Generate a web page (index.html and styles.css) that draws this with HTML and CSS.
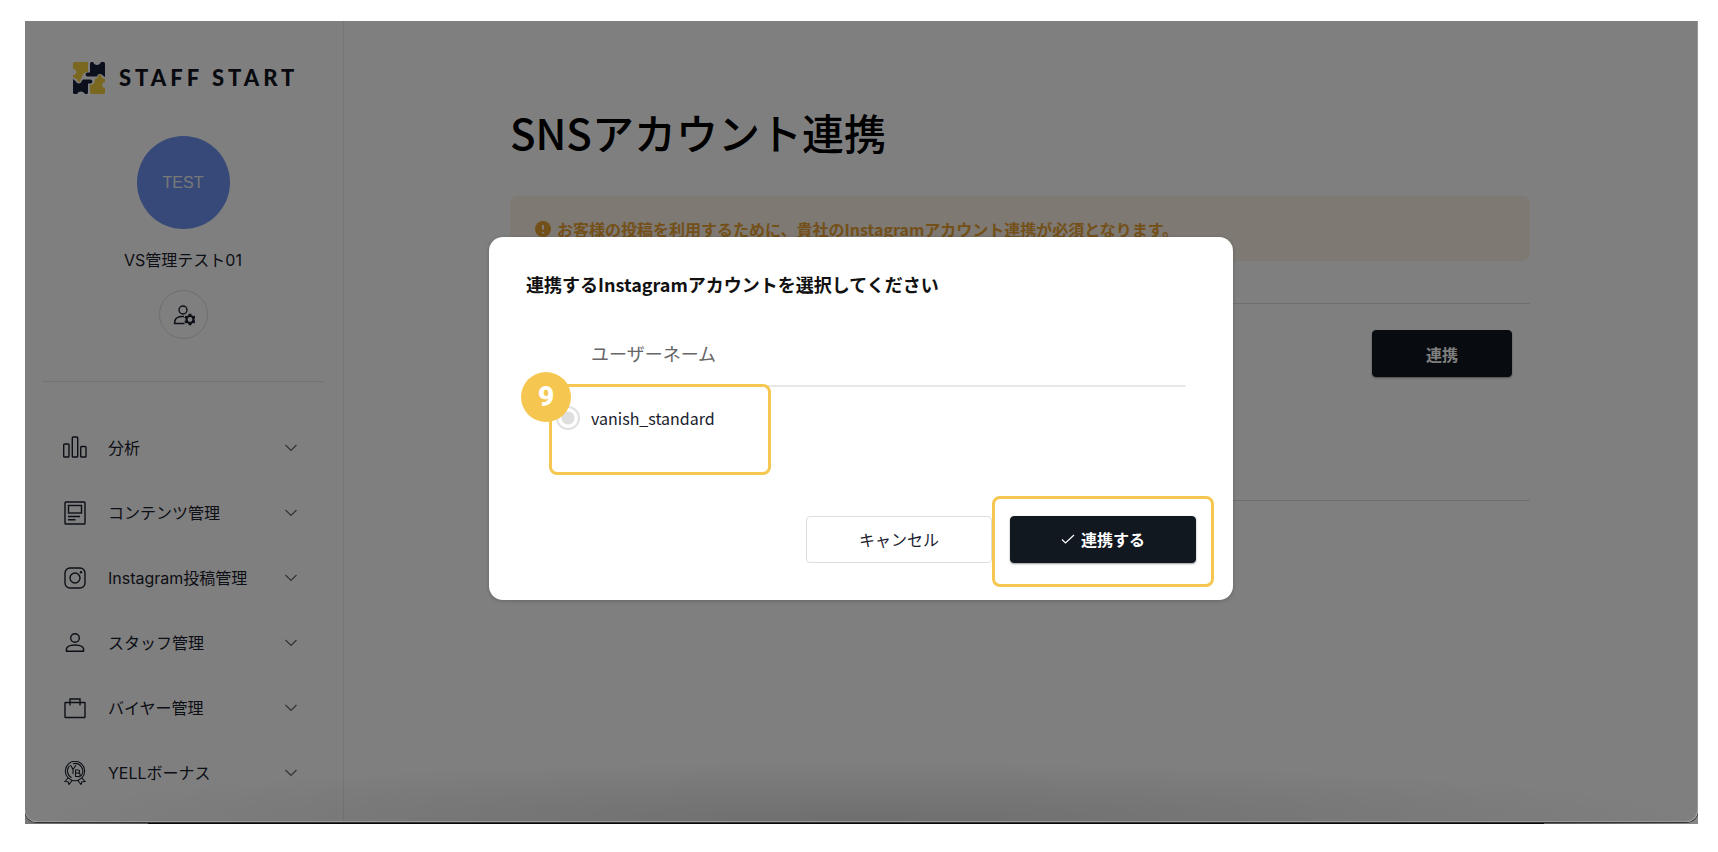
FILE: index.html
```html
<!DOCTYPE html>
<html lang="ja">
<head>
    <meta charset="UTF-8">
    <meta name="viewport" content="width=device-width, initial-scale=1.0">
    <title>SNSアカウント連携</title>
    <link rel="stylesheet" href="styles.css">
</head>
<body>

    <div class="desktop">
        <div class="window">

            <!-- Sidebar -->
            <aside class="sidebar">
                <a class="logo" href="#">
                    <svg class="logo-mark" viewBox="0 0 32 32" aria-hidden="true">
                        <path fill="#f5d142" d="M1.500 0H15V10C11.500 10 9.500 12 9 15C8.500 16.500 7.500 16.500 7.500 18C8 20.500 4.500 20.500 4.500 18.500C4.500 16.500 3 17 0 15.500V13C4.500 13 4.500 7 0 7V1.500Q0 0 1.500 0Z"/>
                        <path fill="#19213a" d="M17 1.500Q17 0 18.500 0H20C21.500 4 26.500 4 28 0H30.500Q32 0 32 1.500V15C30 14 29.500 12.500 27.500 12C25 11.500 24.500 13 24 14.500H14.500C12 14 12 11 14.500 10.500H17Z"/>
                        <path fill="#19213a" d="M0 17L3 19.500C4 22.500 8.500 22 9 18.500L10 17.500H17.500C20 18 20 21 17.500 21.500H15V30.500Q15 32 13.500 32H12C10.500 28.500 5.500 28.500 4 32H1.500Q0 32 0 30.500Z"/>
                        <path fill="#f5d142" d="M17 23C21 23 22 20 22 17C23.500 16 25 16.500 25 14.500C24.500 12 29 12 28.500 14.500C28.500 16.500 30.500 16 32 17V20C28.500 20 28.500 26 32 26V30.500Q32 32 30.500 32H18.500Q17 32 17 30.500Z"/>
                    </svg>
                    <span class="logo-text">STAFF START</span>
                </a>

                <div class="profile">
                    <div class="avatar">TEST</div>
                    <p class="profile-name">VS管理テスト01</p>
                    <button class="profile-button" type="button" aria-label="アカウント設定">
                        <svg width="24" height="24" viewBox="0 0 24 24" fill="none" stroke="#19202c" stroke-width="1.400">
                            <circle cx="12" cy="7" r="4"/>
                            <path d="M13 13.500C7 13 3.500 15 3.500 20.500H13.500"/>
                            <circle cx="19" cy="16.500" r="3.500" stroke-width="2.200"/>
                            <path stroke-width="2.800" d="M19 10.800V13.300M19 19.700V22.200M14 13.600L16.200 14.900M21.800 18.100L24 19.400M14 19.400L16.200 18.100M21.800 14.900L24 13.600"/>
                        </svg>
                    </button>
                </div>

                <nav class="menu">
                    <a class="menu-item" href="#">
                        <svg class="menu-icon" viewBox="0 0 24 24">
                            <rect x="0.700" y="8" width="5.300" height="13" rx="0.800"/>
                            <rect x="9.300" y="1" width="5.400" height="20" rx="0.800"/>
                            <rect x="17.700" y="10.500" width="5.300" height="10.500" rx="0.800"/>
                        </svg>
                        <span class="menu-label">分析</span>
                        <svg class="chevron" viewBox="0 0 16 16"><path d="M2.500 5L8 10.500L13.500 5"/></svg>
                    </a>
                    <a class="menu-item" href="#">
                        <svg class="menu-icon" viewBox="0 0 24 24">
                            <rect x="2" y="1" width="20" height="22" rx="0.800"/>
                            <rect x="5.500" y="4.500" width="13" height="7.500"/>
                            <path d="M5 15.500H17M5 18.700H12.500"/>
                        </svg>
                        <span class="menu-label">コンテンツ管理</span>
                        <svg class="chevron" viewBox="0 0 16 16"><path d="M2.500 5L8 10.500L13.500 5"/></svg>
                    </a>
                    <a class="menu-item" href="#">
                        <svg class="menu-icon" viewBox="0 0 24 24">
                            <rect x="2" y="2" width="20" height="20" rx="5"/>
                            <circle cx="12" cy="12" r="5"/>
                            <circle class="dot" cx="18" cy="6.300" r="1.200"/>
                        </svg>
                        <span class="menu-label">Instagram投稿管理</span>
                        <svg class="chevron" viewBox="0 0 16 16"><path d="M2.500 5L8 10.500L13.500 5"/></svg>
                    </a>
                    <a class="menu-item" href="#">
                        <svg class="menu-icon" viewBox="0 0 24 24">
                            <circle cx="12" cy="7" r="4.300"/>
                            <path d="M3.500 20.300C2.500 16 6 14 12 14S21.500 16 20.500 20.300Z"/>
                        </svg>
                        <span class="menu-label">スタッフ管理</span>
                        <svg class="chevron" viewBox="0 0 16 16"><path d="M2.500 5L8 10.500L13.500 5"/></svg>
                    </a>
                    <a class="menu-item" href="#">
                        <svg class="menu-icon" viewBox="0 0 24 24">
                            <rect x="2" y="6.500" width="20" height="15" rx="0.500"/>
                            <path d="M7 9.500V3H17V9.500"/>
                        </svg>
                        <span class="menu-label">バイヤー管理</span>
                        <svg class="chevron" viewBox="0 0 16 16"><path d="M2.500 5L8 10.500L13.500 5"/></svg>
                    </a>
                    <a class="menu-item" href="#">
                        <svg class="menu-icon thin" viewBox="0 0 24 24">
                            <circle cx="12" cy="10" r="9.700"/>
                            <path d="M8.500 16.700A7.700 7.700 0 0 1 6.500 4.700M10 2.700A7.700 7.700 0 0 1 17.500 15.500M7.500 4L10 8.500V13M13 4L10 8.500M12.500 9H15Q17 9.200 16.500 11T15 12H12.500ZM12.500 12H15.500Q17.500 12.500 17 14.300T15 15.500H12.500Z"/>
                            <path d="M5 17L2 20.500L5 20.800L6 23.500L9.500 19M19 17L22 20.500L19 20.800L18 23.500L14.500 19"/>
                        </svg>
                        <span class="menu-label">YELLボーナス</span>
                        <svg class="chevron" viewBox="0 0 16 16"><path d="M2.500 5L8 10.500L13.500 5"/></svg>
                    </a>
                </nav>
            </aside>

            <!-- Main page -->
            <main class="main">
                <div class="content">
                    <h1>SNSアカウント連携</h1>
                    <div class="notice">
                        <svg width="16" height="16" viewBox="0 0 16 16" aria-hidden="true">
                            <circle cx="8" cy="8" r="8" fill="#e8a033"/>
                            <path d="M8 4V8.500M8 11V12.500" stroke="#fcf2e6" stroke-width="2"/>
                        </svg>
                        <p>お客様の投稿を利用するために、貴社のInstagramアカウント連携が必須となります。</p>
                    </div>
                    <section class="account">
                        <button class="button button-dark button-link" type="button">連携</button>
                    </section>
                </div>
            </main>

            <!-- Account selection dialog -->
            <div class="overlay">
                <form class="modal" role="dialog" aria-labelledby="modalTitle">
                    <h2 id="modalTitle">連携するInstagramアカウントを選択してください</h2>
                    <table class="accounts">
                        <thead>
                            <tr>
                                <th class="select-cell"></th>
                                <th>ユーザーネーム</th>
                            </tr>
                        </thead>
                        <tbody>
                            <tr>
                                <td class="select-cell">
                                    <input type="radio" name="account" id="account1">
                                    <span class="highlight highlight-row"></span>
                                    <span class="badge">9</span>
                                </td>
                                <td><label for="account1">vanish_standard</label></td>
                            </tr>
                        </tbody>
                    </table>
                    <div class="actions">
                        <button class="button button-light" type="button">キャンセル</button>
                        <div class="confirm">
                            <button class="button button-dark" type="button">
                                <svg width="14" height="14" viewBox="0 0 14 14" fill="none" stroke="#fff" stroke-width="1.200" aria-hidden="true">
                                    <path d="M1 7.500L4.500 11L13 3"/>
                                </svg>
                                連携する
                            </button>
                            <span class="highlight highlight-confirm"></span>
                        </div>
                    </div>
                </form>
            </div>

        </div>
    </div>

</body>
</html>
```
FILE: styles.css
```css
* {
    box-sizing: border-box;
}

body {
    margin: 0;
    padding: 21px 20px 28px 25px;
    min-height: 100vh;
    display: flex;
    background: #fff;
    color: #19202c;
    font-family: Inter, "Noto Sans CJK JP", sans-serif;
    font-size: 16px;
    line-height: 24px;
}

h1, h2, p {
    margin: 0;
}

a {
    color: inherit;
    text-decoration: none;
}

/* strip of the desktop showing under the window */
.desktop {
    flex: 1;
    display: flex;
    overflow: hidden;
    padding-bottom: 2px;
    background: linear-gradient(to right, #777 0, #555 123px, #0a0808 123px, #0a0808 calc(100% - 154px), #555 calc(100% - 154px), #888 100%);
}

.window {
    position: relative;
    flex: 1;
    display: flex;
    overflow: hidden;
    background: #fff;
    border-radius: 0 0 12px 12px;
    box-shadow: 0 0 0 1px #333;
}

/* Sidebar */
.sidebar {
    flex: none;
    width: 319px;
    border-right: 1px solid #eaeaea;
}

.logo {
    display: flex;
    align-items: center;
    gap: 14px;
    padding: 41px 0 0 48px;
}

.logo-mark {
    width: 32px;
    height: 32px;
}

.logo-text {
    font-family: Lato, sans-serif;
    font-size: 22px;
    font-weight: 900;
    letter-spacing: 4px;
    color: #10151f;
}

.profile {
    display: flex;
    flex-direction: column;
    align-items: center;
    margin: 0 19px 0 17px;
    padding: 42px 0 42px;
    border-bottom: 1px solid #e6e6e6;
}

.avatar {
    display: flex;
    align-items: center;
    justify-content: center;
    width: 93px;
    height: 93px;
    border-radius: 50%;
    background: #6c92f0;
    color: #f0f0f0;
    font-family: "Liberation Sans", sans-serif;
}

.profile-name {
    margin: 19px 0 18px;
}

.profile-button {
    display: flex;
    align-items: center;
    justify-content: center;
    width: 49px;
    height: 49px;
    padding: 0;
    border: 1px solid #dcdcdc;
    border-radius: 50%;
    background: #fff;
}

.menu {
    padding: 33px 44px 0 38px;
}

.menu-item {
    display: flex;
    align-items: center;
    height: 65px;
}

.menu-icon {
    width: 24px;
    height: 24px;
    margin-right: 21px;
    fill: none;
    stroke: #19202c;
    stroke-width: 1.4;
}

.menu-icon.thin {
    stroke-width: 1.1;
}

.menu-icon .dot {
    fill: #19202c;
    stroke: none;
}

.menu-label {
    flex: 1;
}

.chevron {
    width: 16px;
    height: 16px;
    fill: none;
    stroke: #666;
    stroke-width: 1.2;
}

/* Main page */
.main {
    flex: 1;
    padding: 82px 42px 0 40px;
    font-family: "Noto Sans CJK JP", sans-serif;
}

.content {
    max-width: 1020px;
    margin: 0 auto;
}

h1 {
    color: #000;
    font-size: 42px;
    font-weight: 500;
    line-height: 58px;
}

.notice {
    display: flex;
    align-items: center;
    gap: 6px;
    height: 65px;
    margin: 35px 0 42px;
    padding: 0 25px;
    border-radius: 8px;
    background: #fcf2e6;
    color: #e8a033;
    font-weight: 700;
}

.account {
    display: flex;
    justify-content: flex-end;
    align-items: flex-start;
    height: 198px;
    padding: 26px 18px;
    border-top: 1px solid #dcdcdc;
    border-bottom: 1px solid #dcdcdc;
}

.button {
    display: flex;
    align-items: center;
    justify-content: center;
    gap: 6px;
    width: 186px;
    height: 47px;
    padding: 0;
    border: 1px solid #dedede;
    border-radius: 4px;
    font: 500 16px/24px "Noto Sans CJK JP", sans-serif;
}

.button-light {
    background: #fff;
    color: #19202c;
    font-weight: 400;
}

.button-dark {
    border-color: #111820;
    background: #111820;
    color: #fff;
    font-weight: 700;
    box-shadow: 0 1px 2px rgba(0, 0, 0, 0.4);
}

.button-link {
    width: 140px;
}

/* Dialog */
.overlay {
    position: absolute;
    inset: 0;
    display: flex;
    align-items: center;
    justify-content: center;
    padding-bottom: 6px;
    border-right: 1px solid #999;
    border-bottom: 1px solid #999;
    border-radius: 0 0 12px 12px;
    background: radial-gradient(50% 60px at 50% 100%, rgba(0, 0, 0, 0.13), transparent), rgba(0, 0, 0, 0.5);
}

.modal {
    width: 744px;
    padding: 36px 37px 37px;
    border-radius: 14px;
    background: #fff;
    box-shadow: 0 1px 4px rgba(0, 0, 0, 0.2);
    font-family: "Noto Sans CJK JP", sans-serif;
}

h2 {
    color: #111;
    font-size: 18px;
    font-weight: 700;
    line-height: 22px;
}

.accounts {
    width: calc(100% - 20px);
    margin: 27px 10px 66px;
    border-collapse: collapse;
}

.accounts th,
.accounts td {
    height: 64px;
    padding: 0;
    text-align: left;
    font-weight: 400;
}

.accounts th {
    border-bottom: 2px solid #e8e8e8;
    color: #666;
    font-size: 18px;
}

.accounts .select-cell {
    position: relative;
    width: 55px;
    padding-left: 20px;
}

.accounts input {
    display: block;
    appearance: none;
    width: 24px;
    height: 24px;
    margin: 0;
    border: 2px solid #e0e0e0;
    border-radius: 50%;
    background: radial-gradient(circle, #dedede 6px, #fff 7px);
}

.actions {
    display: flex;
    justify-content: flex-end;
    gap: 18px;
}

.confirm {
    position: relative;
}

/* Step markers */
.highlight {
    position: absolute;
    width: 222px;
    height: 91px;
    border: 3px solid #f6c750;
    border-radius: 8px;
    pointer-events: none;
}

.highlight-row {
    top: -3px;
    left: 13px;
}

.highlight-confirm {
    top: -20px;
    left: -18px;
}

.badge {
    position: absolute;
    top: -15px;
    left: -15px;
    width: 50px;
    height: 50px;
    border-radius: 50%;
    background: #f6c750;
    color: #fff;
    font: 900 28px/50px Roboto, sans-serif;
    text-align: center;
}
```
